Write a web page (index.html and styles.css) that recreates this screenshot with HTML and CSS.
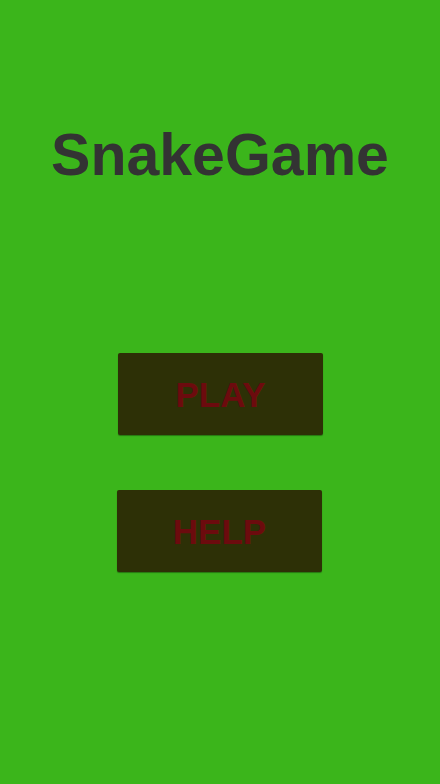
FILE: index.html
```html
<!DOCTYPE html>
<html>
<head>
<meta charset="utf-8">
<link rel="stylesheet" href="styles.css">
</head>
<body>
<main class="screen">
  <h1 class="title">SnakeGame</h1>
  <div class="menu">
    <button class="btn btn-play">PLAY</button>
    <button class="btn btn-help">HELP</button>
  </div>
</main>
</body>
</html>
```

FILE: styles.css
```css
html, body {
  margin: 0;
  padding: 0;
  background: #3bb51b;
}
.screen {
  width: 440px;
  height: 784px;
  display: flex;
  flex-direction: column;
  align-items: center;
  font-family: "Liberation Sans", Arial, sans-serif;
}
.title {
  margin: 120px 0 0 0;
  font-size: 59px;
  font-weight: bold;
  line-height: 70px;
  color: #333333;
}
.menu {
  margin-top: 163px;
  display: flex;
  flex-direction: column;
  align-items: center;
  gap: 55px;
}
.btn {
  width: 205px;
  height: 82px;
  border: none;
  border-radius: 2px;
  background: #2d3006;
  color: #6c0b0e;
  font-family: "Liberation Sans", Arial, sans-serif;
  font-weight: bold;
  font-size: 35px;
  padding: 1px 0 0 0;
  box-shadow: 0 1px 1px rgba(0,0,0,0.35);
}
.btn-play { margin-left: 1px; }
.btn-help { margin-right: 1px; }
```
